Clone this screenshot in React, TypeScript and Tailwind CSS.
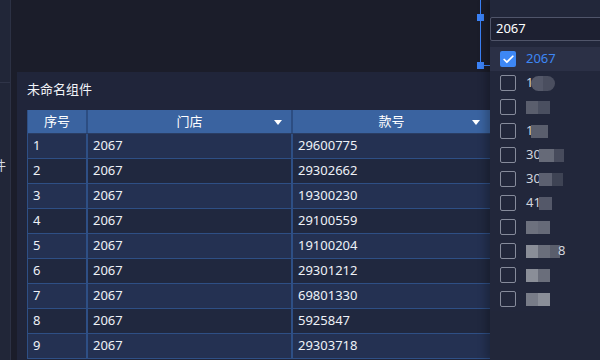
import { Check } from "lucide-react";

const rows = [
  { no: 1, store: "2067", code: "29600775" },
  { no: 2, store: "2067", code: "29302662" },
  { no: 3, store: "2067", code: "19300230" },
  { no: 4, store: "2067", code: "29100559" },
  { no: 5, store: "2067", code: "19100204" },
  { no: 6, store: "2067", code: "29301212" },
  { no: 7, store: "2067", code: "69801330" },
  { no: 8, store: "2067", code: "5925847" },
  { no: 9, store: "2067", code: "29303718" },
];

// 下拉选项（后面的灰块是打码）
const options: { text: string; blocks: [number, string][]; tail?: string; round?: boolean }[] = [
  { text: "1", blocks: [[12, "#545869"], [12, "#4a4e5f"]], round: true },
  { text: "", blocks: [[12, "#5a5e6d"], [12, "#4a4f60"]] },
  { text: "1", blocks: [[17, "#5a5e6d"]] },
  { text: "30", blocks: [[15, "#666a78"], [10, "#474b5c"]] },
  { text: "30", blocks: [[13, "#5c6070"], [11, "#3e4354"]] },
  { text: "41", blocks: [[13, "#545869"]] },
  { text: "", blocks: [[12, "#6d717e"], [12, "#666a78"]] },
  { text: "", blocks: [[12, "#8a8e98"], [12, "#6a6e7b"], [10, "#5a5e6c"]], tail: "8" },
  { text: "", blocks: [[12, "#8a8e98"], [12, "#6a6e7b"]] },
  { text: "", blocks: [[12, "#787c88"], [12, "#8a8e98"]] },
];

function Caret() {
  return (
    <svg width="8" height="5" viewBox="0 0 8 5" className="shrink-0">
      <path d="M0 0h8L4 5z" fill="#ffffff" />
    </svg>
  );
}

function Box({ checked }: { checked?: boolean }) {
  if (checked) {
    return (
      <div className="w-[16px] h-[16px] rounded-[2px] bg-[#3d87f5] flex items-center justify-center">
        <Check size={13} strokeWidth={3.2} color="#ffffff" />
      </div>
    );
  }
  return <div className="w-[16px] h-[16px] rounded-[2px] border border-[#868b9b]" />;
}

export default function App() {
  return (
    <div
      className="relative w-[600px] h-[360px] overflow-hidden bg-[#1b1d2a] flex text-[13px]"
      style={{ fontFamily: '"Noto Sans", "Noto Sans CJK SC", sans-serif' }}
    >
      {/* 左侧栏 */}
      <div className="w-[11px] shrink-0 bg-[#212638] border-r border-[#2c3144] overflow-hidden">
        <div className="h-[83px] border-b border-[#2f3448]" />
        <div className="mt-[72px] -ml-[7px] leading-[20px] text-[#d9dce4]">件</div>
      </div>

      {/* 画布 */}
      <div className="flex-1 pl-[6px] pt-[72px] min-w-0">
        <div className="h-full bg-[#20253a] pl-[10px] pt-[7px]">
          <div className="h-[20px] leading-[20px] text-[#f2f4f8]">未命名组件</div>

          <div className="mt-[11px] border-l border-[#2e4f85] w-[600px]">
            {/* 表头 */}
            <div className="flex h-[24px] bg-[#3a63a0] border-b border-[#2a3d63] text-white">
              <div className="w-[60px] border-r-2 border-[#2c4d82] flex items-center justify-center">序号</div>
              <div className="w-[205px] border-r-2 border-[#2c4d82] relative flex items-center justify-center">
                门店
                <span className="absolute right-[9px] top-[10px]"><Caret /></span>
              </div>
              <div className="w-[199px] border-r-2 border-[#2c4d82] relative flex items-center justify-center">
                款号
                <span className="absolute right-[10px] top-[10px]"><Caret /></span>
              </div>
              <div className="flex-1" />
            </div>

            {/* 数据行 */}
            {rows.map((r) => (
              <div
                key={r.no}
                className={`flex h-[25px] border-b border-[#2e4f85] text-[#eef1f7] ${
                  r.no % 2 === 1 ? "bg-[#243152]" : "bg-[#20283f]"
                }`}
              >
                <div className="w-[60px] border-r-2 border-[#2e4f85] pl-[5px] flex items-center">{r.no}</div>
                <div className="w-[205px] border-r-2 border-[#2e4f85] pl-[5px] flex items-center">{r.store}</div>
                <div className="w-[199px] border-r-2 border-[#2e4f85] pl-[5px] flex items-center">{r.code}</div>
                <div className="flex-1" />
              </div>
            ))}
          </div>
        </div>
      </div>

      {/* 选中框的控制柄 */}
      <div className="absolute left-[480px] top-0 w-px h-[66px] bg-[#3b82f6]" />
      <div className="absolute left-[477px] top-[14px] w-[7px] h-[7px] bg-[#3b82f6]" />
      <div className="absolute left-[477px] top-[62px] w-[7px] h-[7px] bg-[#3b82f6]" />
      <div className="absolute left-[484px] top-[65px] w-[6px] h-px bg-[#3b82f6]" />

      {/* 筛选下拉 */}
      <div className="absolute left-[490px] top-0 bottom-0 right-0 bg-[#22273a] shadow-[-4px_0_8px_rgba(0,0,0,0.25)]">
        <div className="mt-[17px] h-[24px] border border-[#50556a] rounded-[2px] bg-[#1d2031] pl-[5px] flex items-center text-white w-[140px]">
          2067
        </div>
        <div className="pt-[6px] bg-[#22273b]">
          <div className="h-[24px] bg-[#2b3046] flex items-center pl-[10px] gap-[10px]">
            <Box checked />
            <span className="text-[#3d87f5]">2067</span>
          </div>
          {options.map((o, i) => (
            <div key={i} className="h-[24px] flex items-center pl-[10px] gap-[10px] text-[#d2d5dd]">
              <Box />
              <div className="flex items-center">
                {o.text && <span>{o.text}</span>}
                <div className={`flex h-[13px] overflow-hidden ${o.round ? "rounded-full h-[15px]" : ""} ${o.text ? "-ml-[2px]" : ""}`}>
                  {o.blocks.map(([w, c], j) => (
                    <div key={j} className="h-full" style={{ width: w, background: c }} />
                  ))}
                </div>
                {o.tail && <span className="-ml-[2px]">{o.tail}</span>}
              </div>
            </div>
          ))}
        </div>
      </div>
    </div>
  );
}
